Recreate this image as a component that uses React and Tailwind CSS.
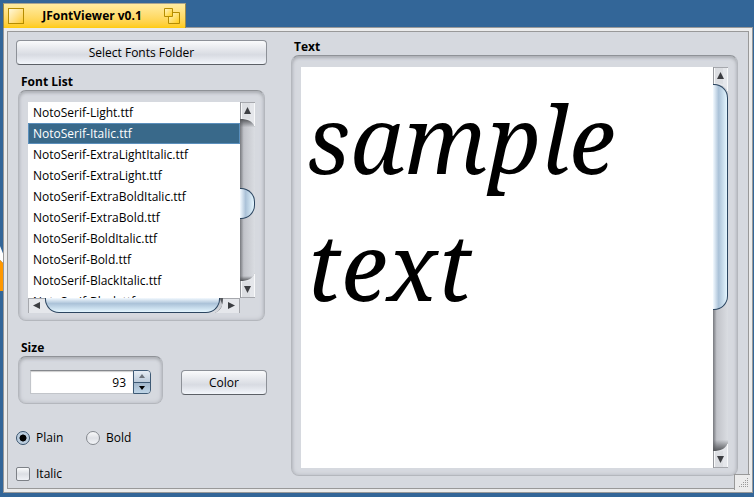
import { useState } from "react";

const fonts = [
  "NotoSerif-Light.ttf",
  "NotoSerif-Italic.ttf",
  "NotoSerif-ExtraLightItalic.ttf",
  "NotoSerif-ExtraLight.ttf",
  "NotoSerif-ExtraBoldItalic.ttf",
  "NotoSerif-ExtraBold.ttf",
  "NotoSerif-BoldItalic.ttf",
  "NotoSerif-Bold.ttf",
  "NotoSerif-BlackItalic.ttf",
  "NotoSerif-Black.ttf",
];

const buttonLook =
  "h-[25px] rounded border border-[#8d9198] border-b-[#5c6066] bg-linear-to-b from-[#fafbfc] via-[#d8dbe2] via-60% to-[#f3f6fb] text-center";

const groupLook =
  "rounded-lg border border-[#b4b7bd] border-t-[#8f9297] bg-[#d6d9df] shadow-[inset_0_2px_3px_#aeb1b7,inset_0_0_4px_#b8bbc1]";

// Arrow at one end of a scroll bar, with the curved lip that reaches into the track
function EndButton({ label, turn }) {
  return (
    <button type="button" aria-label={label} className="relative z-10 h-[17px] w-[15px] shrink-0">
      <svg width="15" height="25" viewBox="0 0 15 25" className={"block " + turn}>
        <path d="M1 16H5Q11 17 15 25V19L11 16Z" fill="#777a80" opacity="0.5" />
        <path d="M0 0H15V25C12 19 8 17 0 17Z" fill="#e5e7eb" />
        <path d="M4 1H10V17L0 16V1Z" fill="#dcdee2" />
        <path d="M0 .5H15" stroke="#a6a8ad" />
        <path d="M.5 0V17" stroke="#96989d" />
        <path d="M1.500 1V17M14.500 1V24" stroke="#f8f9fa" />
        <path d="M7.500 5L11 12H4Z" fill="#3c3e42" />
      </svg>
    </button>
  );
}

function VerticalBar({ before, size, after }) {
  return (
    <div className="flex w-[15px] shrink-0 flex-col bg-linear-to-r from-[#77797e] via-[#c1c3c9] via-25% to-[#dadde2]">
      <EndButton label="Scroll up" turn="" />
      <div className="flex flex-1 flex-col">
        <div style={{ flexGrow: before }} className={before ? "bg-linear-to-b from-[#55575b] to-transparent to-12%" : ""} />
        <div
          style={{ flexGrow: size }}
          className="relative z-20 rounded-r-[14px] border border-l-0 border-[#2b4560] bg-linear-to-r from-[#f4faff] via-[#abc2d8] via-40% to-[#e4f6ff]"
        />
        <div style={{ flexGrow: after }} className="bg-linear-to-t from-[#55575b] to-transparent to-8%" />
      </div>
      <div className="flex h-[17px] items-end">
        <EndButton label="Scroll down" turn="-mt-2 -scale-y-100" />
      </div>
    </div>
  );
}

function HorizontalBar() {
  return (
    <div className="flex h-[15px] w-[212px] bg-linear-to-b from-[#77797e] via-[#c1c3c9] via-25% to-[#dadde2]">
      <button type="button" aria-label="Scroll left" className="w-[17px]">
        <svg width="30" height="15" className="block">
          <path d="M0 0H17C17 9 22 14 30 15H0Z" fill="#e5e7eb" />
          <path d="M0 .5H17M.5 0V15" stroke="#a6a8ad" />
          <path d="M5 7.500L12 4V11Z" fill="#3c3e42" />
        </svg>
      </button>
      <div className="relative z-10 flex-1 rounded-b-[14px] border border-t-0 border-[#2b4560] bg-linear-to-b from-[#f4faff] via-[#abc2d8] via-40% to-[#e4f6ff]" />
      <button type="button" aria-label="Scroll right" className="w-[20px]">
        <svg width="25" height="15" className="-ml-[5px] block">
          <path d="M5 0H9Q8 11 0 15H4L9 12Z" fill="#55585d" />
          <path d="M25 0V15H0C6 12 8 8 8 0Z" fill="#e5e7eb" />
          <path d="M8 .5H25M24.500 0V15" stroke="#a6a8ad" />
          <path d="M20 7.500L13 4V11Z" fill="#3c3e42" />
        </svg>
      </button>
    </div>
  );
}

function TitleTab() {
  return (
    <header className="relative z-10 ml-[3px] flex h-[25px] w-[183px] items-center justify-between border border-b-0 border-[#9c8a48] border-t-[#a8a490] bg-linear-to-b from-[#ffeca0] to-[#ffcb08] pr-1 pl-1">
      <button type="button" aria-label="Close" className="size-4 border border-[#b58c00] bg-linear-to-br from-[#fff8d8] to-[#ffcc1a]" />
      <h1 className="pr-1 font-bold">JFontViewer v0.1</h1>
      <button type="button" aria-label="Zoom">
        <svg width="17" height="17" className="block">
          <defs>
            <linearGradient id="gold" x1="0" y1="0" x2="1" y2="1">
              <stop stopColor="#fff6cc" />
              <stop offset="1" stopColor="#ffcb14" />
            </linearGradient>
          </defs>
          <path d="M4.500 4.500H15.500V15.500H4.500Z" fill="url(#gold)" stroke="#b58c00" />
          <path d="M.5 .5H8.500V8.500H.5Z" fill="url(#gold)" stroke="#b58c00" />
        </svg>
      </button>
    </header>
  );
}

export default function App() {
  const [selected, setSelected] = useState(1);
  const [size, setSize] = useState(93);
  const [weight, setWeight] = useState("plain");
  const [italic, setItalic] = useState(false);

  return (
    <div className="relative flex min-h-screen flex-col overflow-hidden bg-[#336698] pt-[3px] pb-1 font-['Open_Sans','Noto_Sans',sans-serif] text-[12px] leading-4 text-black">
      {/* desktop icon peeking out behind the window */}
      <svg width="4" height="46" className="absolute top-[246px] left-0">
        <path d="M0 0L4 10V18L0 14Z" fill="#fff" />
        <path d="M0 14L4 18V45H0Z" fill="#ff9800" />
      </svg>
      <TitleTab />
      <div className="relative mr-px -mt-px ml-[3px] flex flex-1 border border-[#999] bg-[#ececec] p-[3px]">
        <main className="flex min-w-0 flex-1 gap-6 border border-[#999] bg-[#d6d9df] pt-2 pr-2.5 pb-1 pl-2">
          <section className="flex w-[251px] shrink-0 flex-col">
            <button type="button" className={buttonLook}>
              Select Fonts Folder
            </button>
            <h2 className="mt-[9px] ml-[5px] font-bold">Font List</h2>
            <div className={"mx-0.5 h-[231px] px-[9px] pt-[11px] " + groupLook}>
              <div className="flex h-[196px]">
                <ul role="listbox" aria-label="Font List" className="w-[212px] overflow-hidden bg-white">
                  {fonts.map((font, i) => (
                    <li
                      key={font}
                      role="option"
                      aria-selected={i === selected}
                      onClick={() => setSelected(i)}
                      className={
                        "h-[21px] border px-1 leading-[19px] " +
                        (i === selected ? "border-[#5b8fbc] bg-[#39698a] text-white" : "border-transparent")
                      }
                    >
                      {font}
                    </li>
                  ))}
                </ul>
                <VerticalBar before={70} size={29} after={63} />
              </div>
              <HorizontalBar />
            </div>
            <h2 id="size-label" className="mt-[19px] ml-[5px] font-bold">Size</h2>
            <div className="flex items-center">
              <div className={"ml-0.5 flex h-[48px] w-[145px] items-center px-[11px] pt-1 " + groupLook}>
                <input
                  type="text"
                  aria-labelledby="size-label"
                  value={size}
                  onChange={(e) => setSize(Number(e.target.value) || 0)}
                  className="h-6 min-w-0 flex-1 border border-r-0 border-[#c2c5ca] border-t-[#85888d] bg-white pr-[7px] text-right shadow-[inset_0_1px_1px_#ccc]"
                />
                <div className="flex h-6 w-[18px] flex-col overflow-hidden rounded-r border border-[#3e5a75]">
                  <button type="button" aria-label="Increase size" onClick={() => setSize(size + 1)} className="flex flex-1 items-center justify-center border-b border-[#3e5a75] bg-linear-to-b from-[#e6edf4] to-[#bccbda]">
                    <svg width="6" height="4"><path d="M3 0L6 4H0Z" fill="#6c737b" /></svg>
                  </button>
                  <button type="button" aria-label="Decrease size" onClick={() => setSize(size - 1)} className="flex flex-1 items-center justify-center bg-linear-to-b from-[#a3b8cc] to-[#bfd5e7]">
                    <svg width="6" height="4"><path d="M0 0H6L3 4Z" fill="#000" /></svg>
                  </button>
                </div>
              </div>
              <button type="button" className={"mt-[5px] ml-[18px] w-[86px] " + buttonLook}>
                Color
              </button>
            </div>
            <div className="mt-[26px] flex">
              {["Plain", "Bold"].map((name) => (
                <label key={name} className="flex w-[70px] items-center gap-1.5">
                  <input
                    type="radio"
                    name="weight"
                    checked={weight === name.toLowerCase()}
                    onChange={() => setWeight(name.toLowerCase())}
                    className="size-3.5 appearance-none rounded-full border border-[#85898f] bg-linear-to-b from-[#f8f9fa] via-[#dfe1e6] to-[#f3f5f8] checked:border-[#36516c] checked:bg-radial checked:from-black checked:from-35% checked:via-[#b4c6d8] checked:via-45% checked:to-[#d7e6f2]"
                  />
                  {name}
                </label>
              ))}
            </div>
            <label className="mt-5 flex items-center gap-1.5">
              <input
                type="checkbox"
                checked={italic}
                onChange={() => setItalic(!italic)}
                className="size-3.5 appearance-none rounded-xs border border-[#7d8187] bg-linear-to-b from-[#fafbfc] via-[#dcdfe4] to-[#f0f2f6] checked:bg-[#36516c]"
              />
              Italic
            </label>
          </section>

          <section className="flex min-w-0 flex-1 flex-col pb-2">
            <label htmlFor="sample" className="-mt-px ml-[3px] font-bold">Text</label>
            <div className={"flex flex-1 px-[9px] pt-[11px] pb-[7px] " + groupLook}>
              <textarea
                id="sample"
                spellCheck={false}
                defaultValue="sample text"
                className="min-w-0 flex-1 resize-none overflow-hidden bg-white pt-2 pl-1.5 font-['Noto_Serif','Droid_Serif','DejaVu_Serif',serif] text-[93px] leading-[127px] italic outline-none"
              />
              <VerticalBar before={0} size={225} after={142} />
            </div>
          </section>
        </main>
        <svg width="16" height="16" className="absolute right-0.5 bottom-0.5">
          <path d="M0 0H16V16H0Z" fill="#ececec" />
          <path d="M0 .5H16M.5 0V16" stroke="#999" />
          <path d="M13 4.500h1M11 6.500h1M13 6.500h1M9 8.500h1M11 8.500h1M13 8.500h1M7 10.500h1M9 10.500h1M11 10.500h1M13 10.500h1M5 12.500h1M7 12.500h1M9 12.500h1M11 12.500h1M13 12.500h1" stroke="#999" />
        </svg>
      </div>
    </div>
  );
}
